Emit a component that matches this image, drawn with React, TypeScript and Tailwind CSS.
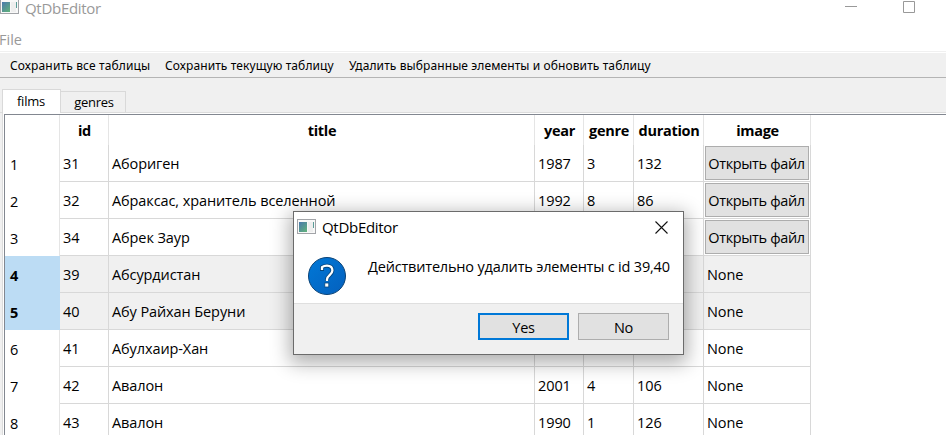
import React from "react";

type Film = { id: string; title: string; year: string; genre: string; duration: string; file?: boolean; selected?: boolean };

const films: Film[] = [
  { id: "31", title: "Абориген", year: "1987", genre: "3", duration: "132", file: true },
  { id: "32", title: "Абраксас, хранитель вселенной", year: "1992", genre: "8", duration: "86", file: true },
  { id: "34", title: "Абрек Заур", year: "", genre: "", duration: "", file: true },
  { id: "39", title: "Абсурдистан", year: "", genre: "", duration: "", selected: true },
  { id: "40", title: "Абу Райхан Беруни", year: "", genre: "", duration: "", selected: true },
  { id: "41", title: "Абулхаир-Хан", year: "", genre: "", duration: "" },
  { id: "42", title: "Авалон", year: "2001", genre: "4", duration: "106" },
  { id: "43", title: "Авалон", year: "1990", genre: "1", duration: "126" },
];

const columns = "grid w-[806px] grid-cols-[55px_49px_426px_49px_50px_70px_107px]";
const cell = "flex items-center border-r border-b border-[#d8d8d8] pl-[3px] pt-px tracking-[-0.1px]";

function AppIcon() {
  return (
    <svg width="19" height="16" viewBox="0 0 19 16" className="shrink-0">
      <defs>
        <linearGradient id="screen" x1="0" y1="0" x2="0.8" y2="1">
          <stop offset="0" stopColor="#4a78ad" />
          <stop offset="1" stopColor="#5fae7e" />
        </linearGradient>
      </defs>
      <rect x="0.5" y="0.5" width="18" height="14" fill="#f8f8f8" stroke="#a2a4a8" />
      <rect x="2" y="3" width="8" height="10" fill="url(#screen)" />
      <rect x="11" y="3" width="5" height="10" fill="#eeeeee" />
      <rect x="16" y="3" width="1" height="6" fill="#5a9c98" />
    </svg>
  );
}

function QuestionIcon() {
  return (
    <svg width="40" height="40" viewBox="0 0 40 40">
      <defs>
        <linearGradient id="disc" x1="0" y1="0" x2="1" y2="1">
          <stop offset="0" stopColor="#0078d7" />
          <stop offset="1" stopColor="#0560bd" />
        </linearGradient>
      </defs>
      <circle cx="20" cy="20" r="18.5" fill="url(#disc)" stroke="#0b4377" />
      <path d="M15 15V11.2C16.6 10 18.2 9.7 20 9.7C23.4 9.7 25.4 11.6 25.4 14.6C25.4 18.8 20 19.6 20 23.5V25" fill="none" stroke="#07477f" strokeWidth="4" />
      <path d="M15 14V11.2C16.6 10 18.2 9.7 20 9.7C23.4 9.7 25.4 11.6 25.4 14.6C25.4 18.8 20 19.6 20 23.5V25" fill="none" stroke="#fff" strokeWidth="2.3" />
      <rect x="17.8" y="27" width="4" height="4" fill="#fff" stroke="#07477f" strokeWidth="0.8" />
    </svg>
  );
}

function Dialog() {
  return (
    <div className="absolute left-[293px] top-[211px] flex h-[144px] w-[391px] flex-col border border-[#6b6b6b] bg-white shadow-[0_5px_18px_3px_rgba(0,0,0,0.32)]">
      <div className="flex h-[32px] shrink-0 items-center pb-[2px] pl-[3px]">
        <AppIcon />
        <span className="ml-[6px] text-[15px] tracking-[-0.3px]">QtDbEditor</span>
        <svg width="13" height="13" viewBox="0 0 13 13" className="ml-auto mr-[15px]">
          <path d="M0.5 0.5L12.5 12.5M12.5 0.5L0.5 12.5" stroke="#111" strokeWidth="1.1" />
        </svg>
      </div>
      <div className="flex h-[59px] shrink-0 pl-[13px] pt-[12px]">
        <QuestionIcon />
        <span className="ml-[21px] mt-px h-[20px] text-[14.5px] leading-[20px] tracking-[-0.19px]">Действительно удалить элементы с id 39,40</span>
      </div>
      <div className="flex flex-1 justify-end gap-[9px] border-t border-[#dfdfdf] bg-[#f0f0f0] pr-[14px] pt-[9px] tracking-[-0.3px]">
        <button className="flex h-[27px] w-[91px] items-center justify-center border-2 border-[#0078d7] bg-[#e1e1e1] pt-[2px]">Yes</button>
        <button className="flex h-[27px] w-[91px] items-center justify-center border border-[#adadad] bg-[#e1e1e1] pt-[2px]">No</button>
      </div>
    </div>
  );
}

export default function App() {
  return (
    <div className="relative flex h-[435px] w-[946px] flex-col overflow-hidden whitespace-nowrap bg-[#f0f0f0] font-['Open_Sans','Noto_Sans',sans-serif] text-[14.5px] text-black">
      <header className="flex h-[51px] shrink-0 flex-col bg-white text-[#999999]">
        <div className="flex h-[28px] items-start">
          <div className="-mt-px"><AppIcon /></div>
          <span className="ml-[6px] h-[16px] text-[15px] leading-[16px] tracking-[-0.3px]">QtDbEditor</span>
          <svg width="72" height="14" viewBox="0 0 72 14" className="ml-auto mr-[30px]">
            <path d="M1 6.5H13M59.5 1.5H70.5V12.5H59.5Z" fill="none" stroke="#999" />
          </svg>
        </div>
        <span className="-ml-px h-[23px] text-[14.5px] leading-[23px]">File</span>
      </header>
      <div className="h-[2px] shrink-0 border-t border-[#f0f0f0] bg-white" />
      <nav className="flex h-[25px] shrink-0 items-center border-b border-[#b4b4b4] pl-[10px] pt-[2px] font-['Noto_Sans',sans-serif] text-[12px] tracking-[0.1px]">
        <span className="w-[155px] tracking-[0.14px]">Сохранить все таблицы</span>
        <span className="w-[184px]">Сохранить текущую таблицу</span>
        <span>Удалить выбранные элементы и обновить таблицу</span>
      </nav>
      <div className="flex h-[35px] shrink-0 items-end border-b border-[#dcdcdc] pl-[2px] text-[13px]">
        <div className="-mb-px flex h-[24px] w-[59px] items-center justify-center border border-b-0 border-[#d9d9d9] bg-white pr-px pt-px tracking-[-0.2px]">films</div>
        <div className="flex h-[21px] w-[65px] items-center justify-center border border-b-0 border-l-0 border-[#d9d9d9] pl-[2px] pt-[2px] tracking-[-0.25px]">genres</div>
      </div>
      <div className="ml-[2px] flex min-h-0 flex-1 border-l border-[#dcdcdc] bg-white pl-px pt-px">
        <div className="flex-1 border-l border-t border-[#828790] bg-white">
          <div className={`${columns} h-[30px] font-bold tracking-[-0.3px]`}>
            {["", "id", "title", "year", "genre", "duration", "image"].map((name, i) => (
              <div key={i} className="flex items-center justify-center border-r border-[#e5e5e5] pl-px pt-[2px]">{name}</div>
            ))}
          </div>
          {films.map((film, i) => (
            <div key={film.id} className={`${columns} h-[37px] ${film.selected ? "bg-[#f0f0f0]" : ""}`}>
              <div className={`flex items-center border-r pl-[5px] pt-[2px] ${film.selected ? "border-[#bcdcf4] bg-[#bcdcf4] font-bold" : "border-[#e5e5e5]"}`}>{i + 1}</div>
              <div className={cell}>{film.id}</div>
              <div className={cell}>{film.title}</div>
              <div className={cell}>{film.year}</div>
              <div className={cell}>{film.genre}</div>
              <div className={cell}>{film.duration}</div>
              {film.file ? (
                <div className="border-r border-b border-[#d8d8d8] p-px">
                  <button className="flex h-[34px] w-full items-center justify-center border border-[#adadad] bg-[#e1e1e1] pr-px pt-px tracking-[-0.35px]">Открыть файл</button>
                </div>
              ) : (
                <div className={cell}>None</div>
              )}
            </div>
          ))}
        </div>
      </div>
      <Dialog />
    </div>
  );
}
